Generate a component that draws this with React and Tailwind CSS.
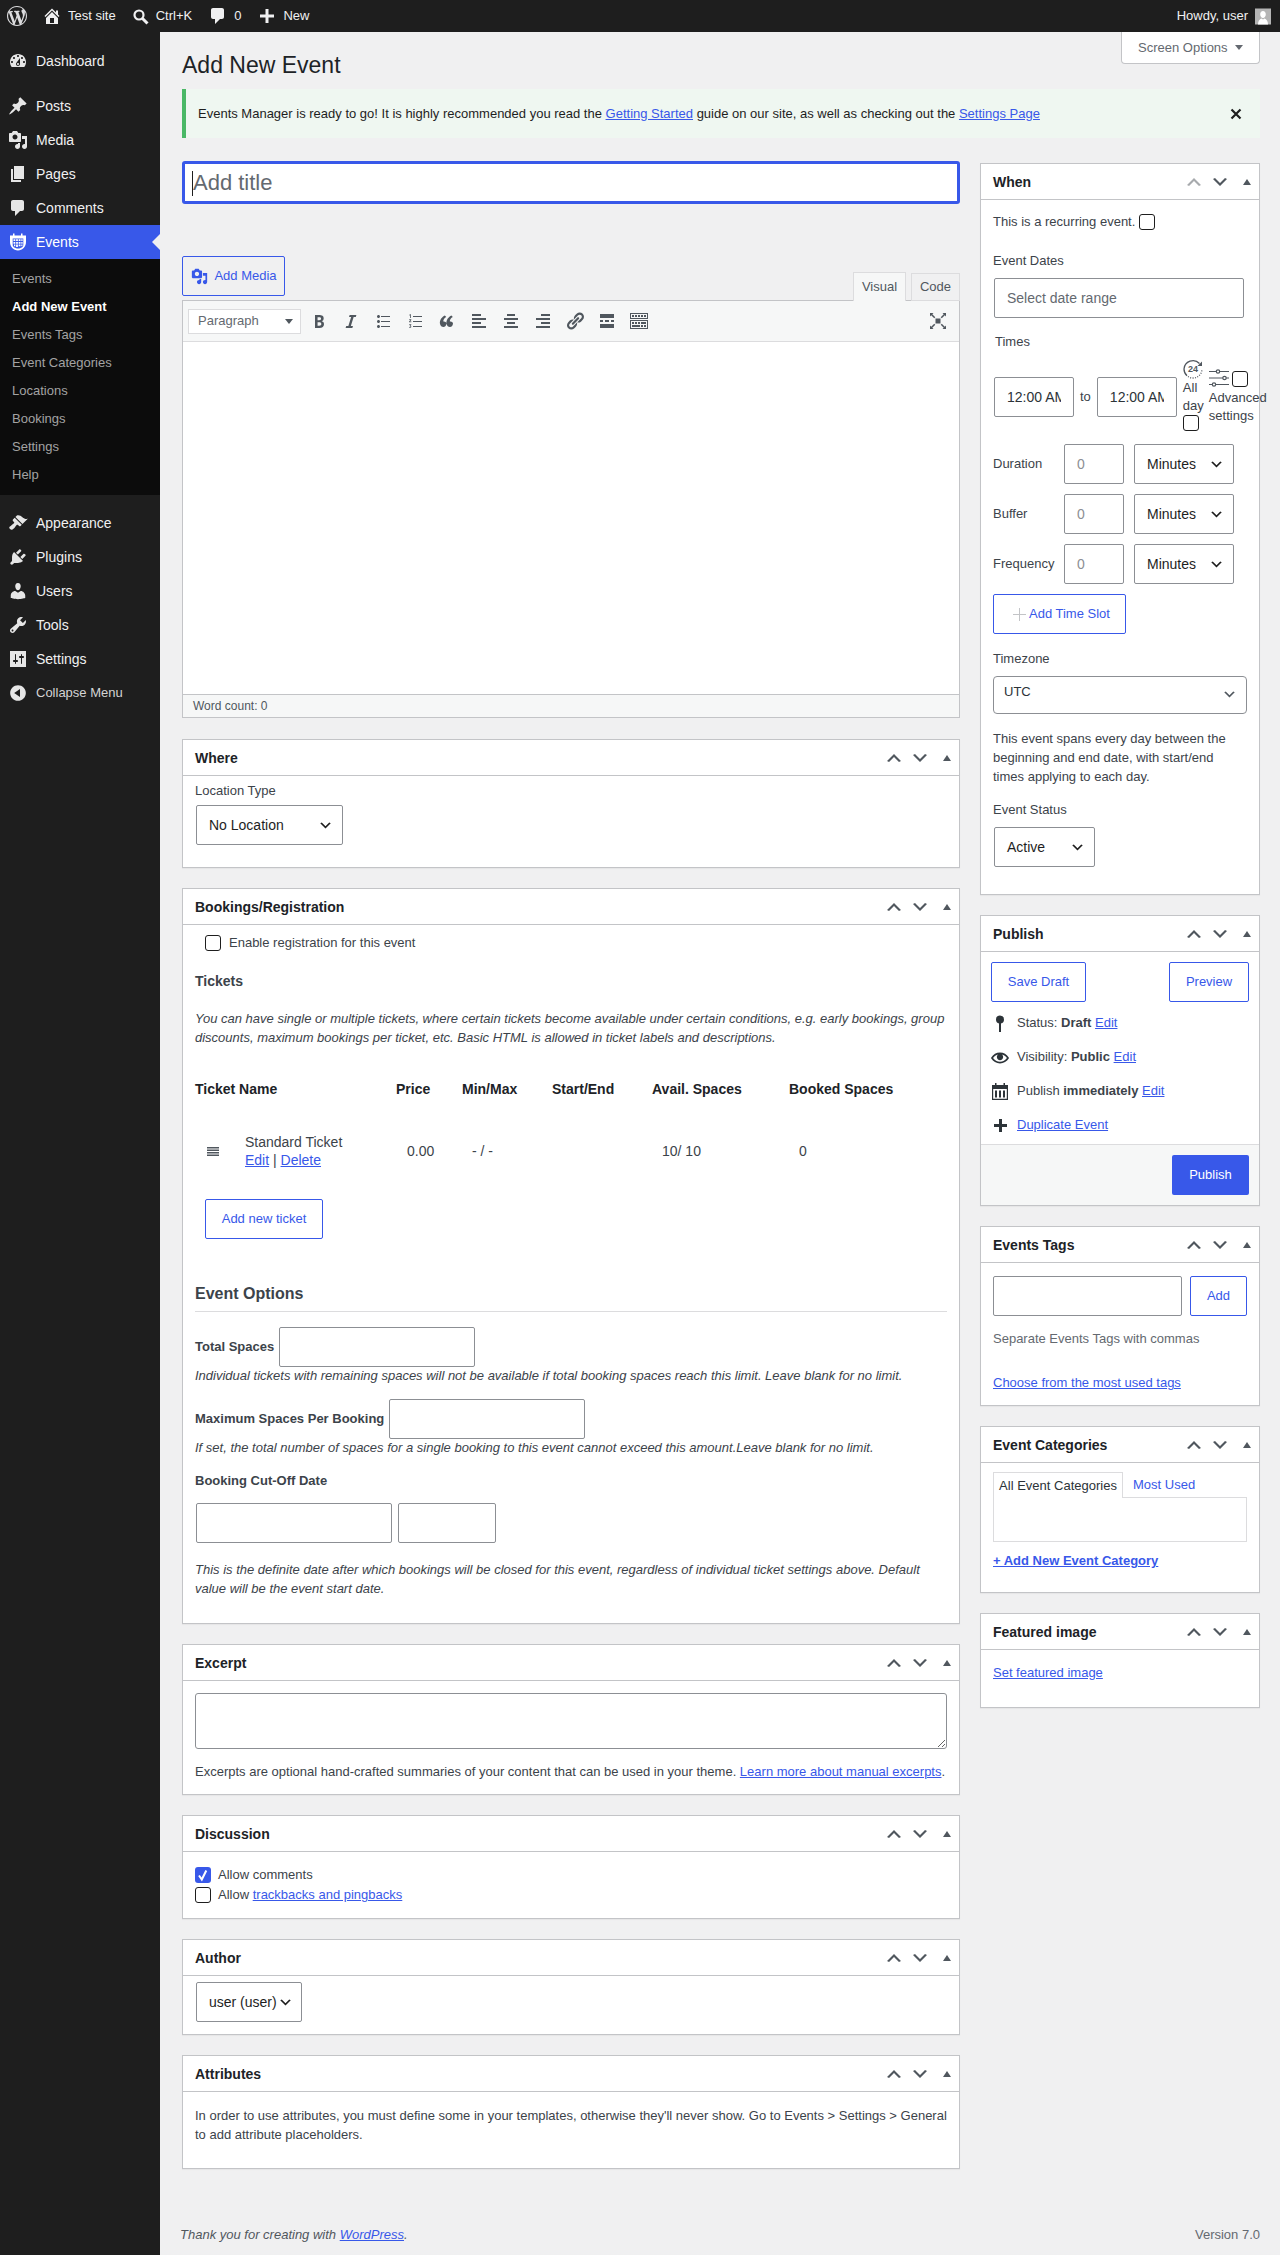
const paths = {
  dashboard: 'M3.76 16h12.48c1.1-1.37 1.76-3.11 1.76-5 0-4.42-3.58-8-8-8s-8 3.58-8 8c0 1.89.66 3.63 1.76 5zM10 4c.55 0 1 .45 1 1s-.45 1-1 1-1-.45-1-1 .45-1 1-1zM6 6c.55 0 1 .45 1 1s-.45 1-1 1-1-.45-1-1 .45-1 1-1zm8 0c.55 0 1 .45 1 1s-.45 1-1 1-1-.45-1-1 .45-1 1-1zm-5.37 5.55L12 7v6c0 1.1-.9 2-2 2s-2-.9-2-2c0-.57.24-1.08.63-1.45zM4 10c.55 0 1 .45 1 1s-.45 1-1 1-1-.45-1-1 .45-1 1-1zm12 0c.55 0 1 .45 1 1s-.45 1-1 1-1-.45-1-1 .45-1 1-1zm-5 3c0-.55-.45-1-1-1s-1 .45-1 1 .45 1 1 1 1-.45 1-1z',
  pin: 'M10.44 3.02l1.82-1.82 6.36 6.35-1.83 1.82c-1.05-.68-2.48-.57-3.41.36l-.75.75c-.92.93-1.04 2.35-.35 3.41l-1.83 1.82-2.41-2.41-2.8 2.79c-.42.42-3.38 2.71-3.8 2.29s1.86-3.39 2.28-3.81l2.79-2.79L4.1 9.36l1.83-1.82c1.05.69 2.48.57 3.4-.36l.75-.75c.93-.92 1.05-2.35.36-3.41z',
  media: 'M13 11V4c0-.55-.45-1-1-1h-1.67L9 1H5L3.67 3H2c-.55 0-1 .45-1 1v7c0 .55.45 1 1 1h10c.55 0 1-.45 1-1zM7 4.5c1.38 0 2.5 1.12 2.5 2.5S8.38 9.5 7 9.5 4.5 8.38 4.5 7 5.62 4.5 7 4.5zM14 6h5v10.5c0 1.38-1.12 2.5-2.5 2.5S14 17.88 14 16.5s1.12-2.5 2.5-2.5c.17 0 .34.02.5.05V9h-3V6zm-4 8.05V13h2v3.5c0 1.38-1.12 2.5-2.5 2.5S7 17.88 7 16.5 8.12 14 9.5 14c.17 0 .34.02.5.05z',
  page: 'M6 15V2h10v13H6zm-1 1h8v2H3V5h2v11z',
  comment: 'M5 2h9c1.1 0 2 .9 2 2v7c0 1.1-.9 2-2 2h-2l-5 5v-5H5c-1.1 0-2-.9-2-2V4c0-1.1.9-2 2-2z',
  appearance: 'M14.48 11.06L7.41 3.99l1.5-1.5c.5-.56 2.3-.47 3.51.32 1.21.8 1.43 1.28 2.91 2.1 1.18.64 2.45 1.26 4.45.85zm-.71.71L6.7 4.7 4.93 6.47c-.39.39-.39 1.02 0 1.41l1.06 1.06c.39.39.39 1.03 0 1.42-.6.6-1.43 1.11-2.21 1.69-.35.26-.7.53-1.01.84C1.43 13.23.5 14.56 2 16s2.77.5 4.11-.77c.31-.31.58-.66.84-1.01.58-.78 1.09-1.61 1.69-2.21.39-.39 1.03-.39 1.42 0l1.06 1.06c.39.39 1.02.39 1.41 0z',
  plugins: 'M13.11 4.36L9.87 7.6 8 5.73l3.24-3.24c.35-.34 1.05-.2 1.56.32.52.51.66 1.21.31 1.55zm-8 1.77l.91-1.12 9.01 9.01-1.19.84c-.71.71-2.63 1.16-3.82 1.16H6.14L4.9 17.26c-.59.59-1.54.59-2.12 0-.59-.58-.59-1.53 0-2.12l1.24-1.24v-3.88c0-1.13.4-3.19 1.09-3.89zm7.26 3.97l3.24-3.24c.34-.35 1.04-.21 1.55.31.52.51.66 1.21.31 1.55l-3.24 3.25z',
  users: 'M10 9.25c-2.27 0-2.73-3.44-2.73-3.44C7 4.02 7.82 2 9.97 2c2.16 0 2.98 2.02 2.71 3.81 0 0-.41 3.44-2.68 3.44zm0 2.57L12.72 10c2.39 0 4.52 2.33 4.52 4.53v2.49s-3.65 1.13-7.24 1.13c-3.65 0-7.24-1.13-7.24-1.13v-2.49c0-2.25 1.94-4.48 4.47-4.48z',
  tools: 'M16.68 9.77c-1.34 1.34-3.3 1.67-4.95.99l-5.41 6.52c-.99.99-2.59.99-3.58 0s-.99-2.59 0-3.57l6.52-5.42c-.68-1.65-.35-3.61.99-4.95 1.28-1.28 3.12-1.62 4.72-1.06l-2.89 2.89 2.82 2.82 2.86-2.87c.53 1.58.18 3.39-1.08 4.65zM3.81 16.21c.4.39 1.04.39 1.43 0 .4-.4.4-1.04 0-1.43-.39-.4-1.03-.4-1.43 0-.39.39-.39 1.03 0 1.43z',
  settings: 'M18 18V2H2v16zM8 11h1c.55 0 1 .45 1 1s-.45 1-1 1H8v1.5c0 .28-.22.5-.5.5s-.5-.22-.5-.5V13H6c-.55 0-1-.45-1-1s.45-1 1-1h1V5.5c0-.28.22-.5.5-.5s.5.22.5.5V11zm5-2h-1c-.55 0-1-.45-1-1s.45-1 1-1h1V5.5c0-.28.22-.5.5-.5s.5.22.5.5V7h1c.55 0 1 .45 1 1s-.45 1-1 1h-1v5.5c0 .28-.22.5-.5.5s-.5-.22-.5-.5V9z',
  collapse: 'M10 2.16c4.33 0 7.84 3.51 7.84 7.84s-3.51 7.84-7.84 7.84S2.16 14.33 2.16 10 5.71 2.16 10 2.16zm2 11.72V6.12L6.18 9.97z',
  home: 'M16 8.5l1.53 1.53-1.06 1.06L10 4.62l-6.47 6.47-1.06-1.06L10 2.5l4 4v-2h2v4zm-6-2.46l6 5.99V18H4v-5.97zM12 17v-5H8v5h4z',
  wp: 'M20 10c0-5.51-4.49-10-10-10C4.48 0 0 4.49 0 10c0 5.52 4.48 10 10 10 5.51 0 10-4.48 10-10zM7.78 15.37L4.37 6.22c.55-.02 1.17-.08 1.17-.08.5-.06.44-1.13-.06-1.11 0 0-1.45.11-2.37.11-.18 0-.37 0-.58-.01C4.12 2.69 6.87 1.11 10 1.11c2.33 0 4.45.87 6.05 2.34-.68-.11-1.65.39-1.65 1.58 0 .74.45 1.36.9 2.1.35.61.55 1.36.55 2.46 0 1.49-1.4 5-1.4 5l-3.03-8.37c.54-.02.82-.17.82-.17.5-.05.44-1.25-.06-1.22 0 0-1.44.12-2.38.12-.87 0-2.33-.12-2.33-.12-.5-.03-.56 1.2-.06 1.22l.92.08 1.26 3.41zM17.41 10c.24-.64.74-1.87.43-4.25.7 1.29 1.05 2.71 1.05 4.25 0 3.29-1.73 6.24-4.4 7.78.97-2.59 1.94-5.2 2.92-7.78zM6.1 18.09C3.12 16.65 1.11 13.53 1.11 10c0-1.3.23-2.48.72-3.59C3.25 10.3 4.67 14.2 6.1 18.09zm4.03-6.63l2.58 6.98c-.86.29-1.76.45-2.71.45-.79 0-1.57-.11-2.29-.33.81-2.38 1.62-4.74 2.42-7.1z',
  plus: 'M8.5 3h3v5.5H17v3h-5.5V17h-3v-5.5H3v-3h5.5z',
  up: 'M15 14l-5-5-5 5-2-1 7-7 7 7z',
  down: 'M5 6l5 5 5-5 2 1-7 7-7-7z',
  tri: 'M6 13l4-6 4 6z',
  bold: 'M6 4v13h4.54c1.37 0 2.46-.33 3.26-1 .8-.66 1.2-1.58 1.2-2.77 0-.84-.17-1.51-.51-2.01s-.9-.85-1.67-1.03v-.09c.57-.1 1.02-.4 1.36-.9s.51-1.13.51-1.91c0-1.14-.39-1.98-1.17-2.5C12.75 4.26 11.5 4 9.78 4H6zm2.57 5.15V6.26h1.36c.73 0 1.27.11 1.61.32.34.22.51.58.51 1.07 0 .54-.16.92-.47 1.15s-.82.35-1.51.35h-1.5zm0 2.19h1.6c1.44 0 2.16.53 2.16 1.61 0 .6-.17 1.05-.51 1.34s-.86.43-1.57.43H8.57v-3.38z',
  italic: 'M14.78 6h-2.13l-2.8 9h2.12l-.62 2H4.6l.62-2h2.14l2.8-9H8.03l.62-2h6.75z',
  ul: 'M5.5 7C4.67 7 4 6.33 4 5.5 4 4.68 4.67 4 5.5 4 6.32 4 7 4.68 7 5.5 7 6.33 6.32 7 5.5 7zM8 5h9v1H8V5zm-2.5 7c-.83 0-1.5-.67-1.5-1.5C4 9.68 4.67 9 5.5 9c.82 0 1.5.68 1.5 1.5 0 .83-.68 1.5-1.5 1.5zM8 10h9v1H8v-1zm-2.5 7c-.83 0-1.5-.67-1.5-1.5 0-.82.67-1.5 1.5-1.5.82 0 1.5.68 1.5 1.5 0 .83-.68 1.5-1.5 1.5zM8 15h9v1H8v-1z',
  ol: 'M8 5h9v1H8V5zm0 5h9v1H8v-1zm0 5h9v1H8v-1zM5.2 3.2h.7V7h-.8V4.2l-.7.4-.3-.5zM4.2 8.3h2.1v.7l-1.2 1.6h1.3v.7H4.1v-.7l1.2-1.6H4.2zm0 5h2.1v.7l-.8.8c.5.1.8.4.8.9 0 .7-.6 1-1.2 1-.4 0-.7-.1-1-.2v-.6c.3.1.6.2.9.2.3 0 .5-.1.5-.4s-.2-.4-.6-.4h-.3v-.6l.8-.8H4.2z',
  quote: 'M9.49 13.22c0-.74-.2-1.38-.61-1.9-.62-.78-1.83-.88-2.53-.72-.29-1.65 1.11-3.75 2.92-4.65L7.88 4.4c-2.73 1.3-5.42 4.28-4.96 8.05C3.21 14.85 4.9 16 6.43 16c.75 0 1.38-.23 1.89-.71.51-.48.77-1.08.77-1.82zm6.54 0c0-.74-.2-1.38-.61-1.9-.63-.78-1.83-.88-2.53-.72-.29-1.65 1.11-3.75 2.92-4.65L14.43 4.4c-2.73 1.3-5.42 4.28-4.96 8.05.29 2.4 1.98 3.55 3.51 3.55.75 0 1.38-.23 1.89-.71.51-.48.77-1.08.77-1.82z',
  alignleft: 'M12 5V3H3v2h9zm5 4V7H3v2h14zm-5 4v-2H3v2h9zm5 4v-2H3v2h14z',
  aligncenter: 'M14 5V3H6v2h8zm3 4V7H3v2h14zm-3 4v-2H6v2h8zm3 4v-2H3v2h14z',
  alignright: 'M17 5V3H8v2h9zm0 4V7H3v2h14zm0 4v-2H8v2h9zm0 4v-2H3v2h14z',
  link: 'M17.74 2.76c1.68 1.69 1.68 4.41 0 6.1l-1.53 1.52c-1.12 1.12-2.7 1.47-4.14 1.09l2.62-2.61.76-.77.76-.76c.84-.84.84-2.2 0-3.04-.84-.85-2.2-.85-3.04 0l-.77.76-3.38 3.38c-.37-1.44-.02-3.02 1.1-4.14l1.52-1.53c1.69-1.68 4.42-1.68 6.1 0zM8.59 13.43l5.34-5.34c.42-.42.42-1.1 0-1.52-.44-.43-1.13-.39-1.53 0l-5.33 5.34c-.42.42-.42 1.1 0 1.52.44.43 1.13.39 1.52 0zm-.76 2.29l4.14-4.15c.38 1.44.03 3.02-1.09 4.14l-1.52 1.53c-1.69 1.68-4.41 1.68-6.1 0-1.68-1.68-1.68-4.42 0-6.1l1.53-1.52c1.12-1.12 2.7-1.47 4.14-1.1l-4.14 4.15c-.85.84-.85 2.2 0 3.05.84.84 2.2.84 3.04 0z',
  more: 'M17 7V3H3v4h14zM6 11V9H3v2h3zm6 0V9H8v2h4zm5 0V9h-3v2h3zm0 6v-4H3v4h14z',
  kitchen: 'M19 2v6H1V2h18zm-1 5V3H2v4h16zM5 4v2H3V4h2zm3 0v2H6V4h2zm3 0v2H9V4h2zm3 0v2h-2V4h2zm3 0v2h-2V4h2zm2 5v9H1V9h18zm-1 8v-7H2v7h16zM5 11v2H3v-2h2zm3 0v2H6v-2h2zm3 0v2H9v-2h2zm6 0v2h-5v-2h5zm-6 3v2H3v-2h8zm3 0v2h-2v-2h2zm3 0v2h-2v-2h2z',
  dfw: 'M7.5 7.5h5v5h-5zM2 2h3.5L4.3 3.2l3 3-1.100 1.100-3-3L2 5.500zm16 0v3.500l-1.200-1.200-3 3-1.100-1.100 3-3L14.500 2zM2 18v-3.500l1.200 1.200 3-3 1.100 1.100-3 3L5.500 18zm16 0h-3.500l1.200-1.200-3-3 1.100-1.100 3 3 1.200-1.200z',
  eye: 'M19.7 9.4C17.7 6 14 3.9 10 3.9S2.3 6 .3 9.4L0 10l.3.6c2 3.4 5.7 5.5 9.7 5.5s7.7-2.1 9.7-5.5l.3-.6-.3-.6zM10 14.1c-3.1 0-6-1.6-7.7-4.1C3.6 8 5.7 6.600 8 6.100c-.9.6-1.5 1.700-1.5 2.900 0 1.900 1.600 3.500 3.500 3.500s3.500-1.600 3.500-3.500c0-1.200-.6-2.300-1.500-2.900 2.300.5 4.400 1.900 5.700 3.900-1.700 2.500-4.600 4.100-7.700 4.100z',
}

const Icon = ({ name, size = 20, className = '' }) => (
  <svg viewBox="0 0 20 20" width={size} height={size} fill="currentColor" fillRule="evenodd" className={`shrink-0 ${className}`}>
    <path d={paths[name]} />
  </svg>
)

const EventsIcon = () => (
  <svg viewBox="0 0 20 20" width="20" height="20" className="shrink-0">
    <path fill="#fff" d="M2 3.5h3V1.500h1.500v2h6.500V1.500h1.500v2H18V10c0 4.500-3.500 8.500-8 8.500S2 14.500 2 10z" />
    <path fill="#3858e9" d="M4.700 6.500h10.600v6.500c0 1.800-2.400 3.500-5.300 3.500S4.700 14.800 4.700 13z" />
    <path fill="#fff" d="M5.500 7.300h1.800v1.800H5.500zm2.600 0h1.800v1.800H8.100zm2.600 0h1.800v1.800h-1.800zm2.600 0h1.300v1.800h-1.300zM5.500 9.900h1.800v1.800H5.500zm2.600 0h1.800v1.800H8.100zm2.600 0h1.800v1.800h-1.800zm2.600 0h1.300v1.800h-1.300zM6 12.500h1.300v1.800H6zm2.100 0h1.800v2.600H8.100zm2.600 0h1.800v1.800h-1.800zm2.600 0H14.500v1.200l-1.200.6z" />
  </svg>
)

const MENU_TOP = [
  ['pin', 'Posts'],
  ['media', 'Media'],
  ['page', 'Pages'],
  ['comment', 'Comments'],
]
const MENU_BOTTOM = [
  ['appearance', 'Appearance'],
  ['plugins', 'Plugins'],
  ['users', 'Users'],
  ['tools', 'Tools'],
  ['settings', 'Settings'],
]
const SUBMENU = ['Events', 'Add New Event', 'Events Tags', 'Event Categories', 'Locations', 'Bookings', 'Settings', 'Help']
const TOOLBAR = ['bold', 'italic', 'ul', 'ol', 'quote', 'alignleft', 'aligncenter', 'alignright', 'link', 'more', 'kitchen']

const MenuItem = ({ icon, label }) => (
  <div className="flex h-[34px] items-center pl-2 text-sm text-[#f0f0f1]">
    <Icon name={icon} className="text-[#e6e6e6]" />
    <span className="ml-2">{label}</span>
  </div>
)

const Sidebar = () => (
  <aside className="w-40 shrink-0 bg-[#1e1e1e] pt-3">
    <MenuItem icon="dashboard" label="Dashboard" />
    <div className="mt-[11px]">
      {MENU_TOP.map(([icon, label]) => <MenuItem key={label} icon={icon} label={label} />)}
    </div>
    <div className="relative flex h-[34px] items-center bg-[#3858e9] pl-2 text-sm text-white">
      <EventsIcon />
      <span className="ml-2">Events</span>
      <span className="absolute right-0 top-[9px] h-0 w-0 border-y-8 border-r-8 border-y-transparent border-r-[#f0f0f1]" />
    </div>
    <div className="bg-[#0c0c0c] py-1.5">
      {SUBMENU.map((item) => (
        <div key={item} className={`flex h-7 items-center pl-3 text-[13px] ${item === 'Add New Event' ? 'font-bold text-white' : 'text-[#a3a3a3]'}`}>
          {item}
        </div>
      ))}
    </div>
    <div className="mt-[11px]">
      {MENU_BOTTOM.map(([icon, label]) => <MenuItem key={label} icon={icon} label={label} />)}
      <div className="flex h-[34px] items-center pl-2 text-[13px] text-[#d4d4d4]">
        <Icon name="collapse" className="text-[#e6e6e6]" />
        <span className="ml-2">Collapse Menu</span>
      </div>
    </div>
  </aside>
)

const AdminBar = () => (
  <header className="flex h-8 items-center bg-[#1e1e1e] text-[13px] text-[#f0f0f1]">
    <Icon name="wp" className="ml-[7px] text-[#dcdcde]" />
    <Icon name="home" className="ml-[15px]" />
    <span className="ml-1.5">Test site</span>
    <svg viewBox="0 0 18 18" width="18" height="18" className="ml-4 mt-0.5 shrink-0" fill="none" stroke="currentColor">
      <circle cx="7" cy="7" r="4.5" strokeWidth="2.2" />
      <path d="M10.5 10.5l5 5" strokeWidth="3" />
    </svg>
    <span className="ml-1.5">Ctrl+K</span>
    <Icon name="comment" className="ml-4" />
    <span className="ml-1.5">0</span>
    <Icon name="plus" className="ml-4" />
    <span className="ml-1.5">New</span>
    <span className="ml-auto">Howdy, user</span>
    <svg viewBox="0 0 16 16" width="16" height="17" className="ml-[7px] mr-[9px] shrink-0">
      <rect width="16" height="16" fill="#b5b5b5" />
      <path fill="#fff" d="M8 2.5c1.7 0 2.8 1.3 2.8 3.2S9.7 9.5 8 9.5 5.200 7.600 5.200 5.700 6.300 2.500 8 2.500zM3 16c0-3.500 1.500-5.500 3.500-6l1.500 1 1.500-1c2 .5 3.500 2.500 3.500 6z" />
    </svg>
  </header>
)

const Box = ({ title, upLight, children, className = '' }) => (
  <section className={`border border-[#c3c4c7] bg-white shadow-[0_1px_1px_rgba(0,0,0,0.04)] ${className}`}>
    <div className="flex h-9 items-center border-b border-[#c3c4c7] pl-3">
      <h2 className="flex-1 text-sm font-bold text-[#1d2327]">{title}</h2>
      <span className={`flex w-[22px] justify-center ${upLight ? 'text-[#a7aaad]' : 'text-[#50575e]'}`}><Icon name="up" /></span>
      <span className="flex w-[30px] justify-center text-[#50575e]"><Icon name="down" /></span>
      <span className="flex w-6 justify-center text-[#50575e]"><Icon name="tri" /></span>
    </div>
    {children}
  </section>
)

const Check = ({ className = '' }) => (
  <span className={`inline-block h-4 w-4 shrink-0 rounded-[3px] border border-[#1e1e1e] bg-white ${className}`} />
)

const Input = ({ className = '', ...props }) => (
  <input className={`h-10 rounded-[2px] border border-[#8c8f94] bg-white px-3 text-sm text-[#2c3338] outline-none ${className}`} {...props} />
)

const Select = ({ label, className = '' }) => (
  <div className={`flex h-10 items-center justify-between rounded-[2px] border border-[#8c8f94] bg-white pl-3 pr-[9px] text-sm text-[#1e1e1e] ${className}`}>
    <span className="whitespace-nowrap">{label}</span>
    <Icon name="down" size={15} />
  </div>
)

const Btn = ({ children, className = '' }) => (
  <button type="button" className={`flex h-10 items-center justify-center rounded-[2px] border border-[#3858e9] text-[13px] text-[#3858e9] ${className}`}>
    {children}
  </button>
)

const A = ({ children, className = '' }) => (
  <a href="#" className={`text-[#3858e9] underline ${className}`}>{children}</a>
)

const Editor = () => (
  <>
    <div className="mt-[52px] flex items-end justify-between">
      <Btn className="mb-1 w-[103px]">
        <Icon name="media" size={17} className="mr-[6px] ml-px" />
        Add Media
      </Btn>
      <div className="relative z-10 -mb-px flex items-end text-[13px] text-[#50575e]">
        <div className="flex h-[29px] w-[53px] items-center justify-center border border-b-0 border-[#dcdcde] bg-[#f6f7f7]">Visual</div>
        <div className="ml-[5px] flex h-7 w-[49px] items-center justify-center border border-[#dcdcde] bg-[#f0f0f1]">Code</div>
      </div>
    </div>
    <div className="flex h-[418px] flex-col border border-[#c3c4c7] bg-white">
      <div className="flex h-[41px] items-center border-b border-[#dcdcde] bg-[#f6f7f7] pl-[5px] pr-[11px] text-[#50575e]">
        <div className="flex h-[25px] w-[113px] items-center justify-between border border-[#dcdcde] bg-white pl-[9px] pr-[7px] text-[13px] text-[#646970]">
          Paragraph
          <span className="h-0 w-0 border-x-4 border-t-[5px] border-x-transparent border-t-[#50575e]" />
        </div>
        <div className="ml-0.5 flex">
          {TOOLBAR.map((name) => (
            <span key={name} className="flex w-8 justify-center"><Icon name={name} /></span>
          ))}
        </div>
        <Icon name="dfw" className="ml-auto" />
      </div>
      <div className="flex-1" />
      <div className="flex h-[23px] items-center border-t border-[#c3c4c7] bg-[#f6f7f7] pl-[10px] text-xs text-[#50575e]">Word count: 0</div>
    </div>
  </>
)

const LeftColumn = () => (
  <div className="w-[778px] shrink-0 text-[13px] text-[#3c434a]">
    <div className="relative h-[43px] rounded-[3px] border-[3px] border-[#3858e9] bg-white">
      <input className="h-full w-full pl-[8px] text-[22px] outline-none placeholder:text-[#646970]" placeholder="Add title" />
      <span className="absolute left-[7px] top-[7px] h-[25px] w-px bg-[#1e1e1e]" />
    </div>
    <Editor />

    <Box title="Where" className="mt-[21px] h-[129px]">
      <div className="px-3 pt-[6px]">
        <div className="h-[18px] leading-[18px]">Location Type</div>
        <Select label="No Location" className="ml-px mt-[5px] w-[147px]" />
      </div>
    </Box>

    <Box title="Bookings/Registration" className="mt-5 h-[736px]">
      <div className="px-3 pt-[10px]">
        <div className="ml-[10px] flex h-4 items-center">
          <Check />
          <span className="ml-2">Enable registration for this event</span>
        </div>
        <div className="mt-[21px] h-[18px] text-sm font-bold leading-[18px]">Tickets</div>
        <p className="mt-5 w-[752px] italic leading-[18.5px]">
          You can have single or multiple tickets, where certain tickets become available under certain conditions, e.g. early bookings, group discounts, maximum bookings per ticket, etc. Basic HTML is allowed in ticket labels and descriptions.
        </p>
        <div className="mt-[33px] grid h-[18px] grid-cols-[201px_66px_90px_100px_137px_1fr] text-sm font-bold leading-[18px] text-[#1d2327]">
          <span>Ticket Name</span>
          <span>Price</span>
          <span>Min/Max</span>
          <span>Start/End</span>
          <span>Avail. Spaces</span>
          <span>Booked Spaces</span>
        </div>
        <div className="mt-[35px] grid h-9 grid-cols-[201px_66px_90px_100px_137px_1fr] items-center text-sm leading-[18px]">
          <div className="flex items-center">
            <svg viewBox="0 0 12 9" width="12" height="9" className="ml-3 shrink-0" fill="#50575e">
              <path d="M0 0h12v1.5H0zM0 2.5h12V4H0zM0 5h12v1.5H0zM0 7.5h12V9H0z" />
            </svg>
            <div className="ml-[26px]">
              <div>Standard Ticket</div>
              <div><A>Edit</A> | <A>Delete</A></div>
            </div>
          </div>
          <span className="pl-[11px]">0.00</span>
          <span className="pl-[10px]">- / -</span>
          <span />
          <span className="pl-[10px]">10/ 10</span>
          <span className="pl-[10px]">0</span>
        </div>
        <Btn className="ml-[10px] mt-[30px] w-[118px]">Add new ticket</Btn>
        <h3 className="mt-[46px] h-[18px] text-base font-bold leading-[18px]">Event Options</h3>
        <div className="mt-2 border-t border-[#dcdcde]" />
        <div className="mt-[15px] flex items-center">
          <b className="whitespace-nowrap">Total Spaces</b>
          <Input className="ml-[5px] w-[196px]" />
        </div>
        <p className="h-[18px] italic leading-[18px]">Individual tickets with remaining spaces will not be available if total booking spaces reach this limit. Leave blank for no limit.</p>
        <div className="mt-[14px] flex items-center">
          <b className="whitespace-nowrap">Maximum Spaces Per Booking</b>
          <Input className="ml-[5px] w-[196px]" />
        </div>
        <p className="h-[18px] italic leading-[18px]">If set, the total number of spaces for a single booking to this event cannot exceed this amount.Leave blank for no limit.</p>
        <div className="mt-[15px] h-[18px] font-bold leading-[18px]">Booking Cut-Off Date</div>
        <div className="ml-px mt-[13px] flex">
          <Input className="w-[196px]" />
          <Input className="ml-[6px] w-[98px]" />
        </div>
        <p className="mt-[18px] w-[752px] italic leading-[18.5px]">
          This is the definite date after which bookings will be closed for this event, regardless of individual ticket settings above. Default value will be the event start date.
        </p>
      </div>
    </Box>

    <Box title="Excerpt" className="mt-5 h-[151px]">
      <div className="px-3 pt-3">
        <textarea className="block h-[56px] w-[752px] rounded-[3px] border border-[#8c8f94] bg-white outline-none" />
        <p className="mt-[14px] leading-[18px]">
          Excerpts are optional hand-crafted summaries of your content that can be used in your theme. <A>Learn more about manual excerpts</A>.
        </p>
      </div>
    </Box>

    <Box title="Discussion" className="mt-5 h-[104px]">
      <div className="px-3 pt-[15px]">
        <div className="flex h-4 items-center">
          <span className="flex h-4 w-4 shrink-0 items-center justify-center rounded-[3px] bg-[#3858e9]">
            <svg viewBox="0 0 16 16" width="16" height="16" fill="none" stroke="#fff" strokeWidth="2"><path d="M4 8.5l2.8 4 4.500-9" /></svg>
          </span>
          <span className="ml-[7px]">Allow comments</span>
        </div>
        <div className="mt-1 flex h-4 items-center">
          <Check />
          <span className="ml-[7px]">Allow <A>trackbacks and pingbacks</A></span>
        </div>
      </div>
    </Box>

    <Box title="Author" className="mt-5 h-[96px]">
      <div className="pl-[13px] pt-[6px]">
        <Select label="user (user)" className="w-[106px] !pr-[8px]" />
      </div>
    </Box>

    <Box title="Attributes" className="mt-5 h-[114px]">
      <p className="px-3 pt-[14px] leading-[19px]">
        In order to use attributes, you must define some in your templates, otherwise they'll never show. Go to Events &gt; Settings &gt; General to add attribute placeholders.
      </p>
    </Box>
  </div>
)

const WhenBox = () => (
  <Box title="When" upLight className="h-[732px]">
    <div className="px-3 pt-[14px]">
      <div className="flex h-4 items-center">
        This is a recurring event.
        <Check className="ml-1" />
      </div>
      <div className="mt-[22px] h-[18px] leading-[18px]">Event Dates</div>
      <Input className="ml-px mt-2 w-[250px] placeholder:text-[#646970]" placeholder="Select date range" />
      <div className="ml-0.5 mt-[15px] h-[18px] leading-[18px]">Times</div>
      <div className="ml-px mt-2 flex h-[73px] items-start leading-[18px]">
        <Input className="mt-[18px] w-20" defaultValue="12:00 AM" readOnly />
        <span className="ml-1.5 mt-[29px]">to</span>
        <Input className="ml-1.5 mt-[18px] w-20" defaultValue="12:00 AM" readOnly />
        <div className="ml-1.5 w-5">
          <svg viewBox="0 0 20 20" width="20" height="20" className="text-[#50575e]" fill="none" stroke="currentColor" strokeWidth="1.3">
            <path d="M16.500 4.500A9 9 0 0 0 1 10a9 9 0 0 0 3 6.700" />
            <path strokeDasharray="1 1.400" d="M5 17.500A9 9 0 0 0 19 10" />
            <path fill="currentColor" stroke="none" d="M19 2.500v4.500h-4.500z" />
            <text x="10" y="13" textAnchor="middle" fontSize="9" fontWeight="700" fill="currentColor" stroke="none">24</text>
          </svg>
          <div>All</div>
          <div>day</div>
          <Check />
        </div>
        <div className="ml-1.5 mt-[10px] w-[60px] whitespace-nowrap">
          <div className="flex h-5 items-center">
            <svg viewBox="0 0 20 20" width="20" height="20" className="shrink-0" fill="none" stroke="#50575e" strokeWidth="1.2">
              <path d="M0 2.500h20M0 9h20M0 15.500h20" />
              <circle cx="9" cy="2.500" r="1.700" fill="#fff" />
              <circle cx="15.500" cy="9" r="1.700" fill="#fff" />
              <circle cx="5" cy="15.500" r="1.700" fill="#fff" />
            </svg>
            <Check className="ml-[3px]" />
          </div>
          <div>Advanced</div>
          <div>settings</div>
        </div>
      </div>
      <div className="mt-3 flex flex-col gap-[10px]">
        {['Duration', 'Buffer', 'Frequency'].map((label) => (
          <div key={label} className="flex items-center">
            <span className="w-[71px]">{label}</span>
            <Input className="w-[60px] placeholder:text-[#8c8f94]" placeholder="0" />
            <Select label="Minutes" className="ml-[10px] w-[100px]" />
          </div>
        ))}
      </div>
      <Btn className="mt-[10px] w-[133px] justify-start pl-[19px]">
        <svg viewBox="0 0 13 13" width="13" height="13" className="mr-[3px]" stroke="#c3c4c7" strokeWidth="1"><path d="M6.5 0v13M0 6.5h13" /></svg>
        Add Time Slot
      </Btn>
      <div className="mt-4 h-[18px] leading-[18px]">Timezone</div>
      <div className="mt-2 flex h-[38px] w-[254px] items-start justify-between rounded-[4px] border border-[#8c8f94] bg-white pl-[10px] pr-[9px] pt-[6px] text-[#2c3338]">
        <span className="leading-[18px]">UTC</span>
        <Icon name="down" size={15} className="mt-[4px] text-[#50575e]" />
      </div>
      <p className="mt-[15px] leading-[19px]">This event spans every day between the beginning and end date, with start/end times applying to each day.</p>
      <div className="mt-[15px] h-[18px] leading-[18px]">Event Status</div>
      <Select label="Active" className="ml-px mt-2 w-[101px]" />
    </div>
  </Box>
)

const PublishRow = ({ icon, children }) => (
  <div className="flex h-[34px] items-center">
    <span className="flex w-[18px] justify-center text-[#2c3338]">{icon}</span>
    <span className="ml-2">{children}</span>
  </div>
)

const PublishBox = () => (
  <Box title="Publish" className="mt-5 h-[291px]">
    <div className="flex justify-between pl-[10px] pr-[10px] pt-[10px]">
      <Btn className="w-[95px]">Save Draft</Btn>
      <Btn className="w-20">Preview</Btn>
    </div>
    <div className="mt-1 pl-[10px]">
      <PublishRow icon={
        <svg viewBox="0 0 10 17" width="10" height="17" fill="currentColor"><circle cx="5" cy="4.5" r="4" /><path d="M4 6h2v11H4z" /></svg>
      }>Status: <b>Draft</b> <A>Edit</A></PublishRow>
      <PublishRow icon={<Icon name="eye" size={18} className="mt-0.5" />}>Visibility: <b>Public</b> <A>Edit</A></PublishRow>
      <PublishRow icon={
        <svg viewBox="0 0 16 17" width="16" height="17" fill="currentColor" fillRule="evenodd">
          <path d="M3 0h1.5v2h7V0H13v2h3v15H0V2h3zM1.2 6v9.800h13.600V6zM3 7.500h2v7H3zm4 0h2v7H7zm4 0h2v7h-2z" />
        </svg>
      }>Publish <b>immediately</b> <A>Edit</A></PublishRow>
      <PublishRow icon={
        <svg viewBox="0 0 13 13" width="13" height="13" fill="currentColor"><path d="M5 0h3v5h5v3H8v5H5V8H0V5h5z" /></svg>
      }><A>Duplicate Event</A></PublishRow>
    </div>
    <div className="mt-0.5 flex h-[61px] justify-end border-t border-[#dcdcde] bg-[#f6f7f7] pr-[10px] pt-[10px]">
      <button type="button" className="h-10 w-[77px] rounded-[2px] bg-[#3858e9] text-[13px] text-white">Publish</button>
    </div>
  </Box>
)

const RightColumn = () => (
  <div className="w-[280px] shrink-0 pt-0.5 text-[13px] text-[#3c434a]">
    <WhenBox />
    <PublishBox />
    <Box title="Events Tags" className="mt-5 h-[180px]">
      <div className="px-3 pt-[13px]">
        <div className="flex">
          <Input className="w-[189px]" />
          <Btn className="ml-2 w-[57px]">Add</Btn>
        </div>
        <p className="mt-[14px] leading-[18px] text-[#646970]">Separate Events Tags with commas</p>
        <p className="mt-[26px] leading-[18px]"><A>Choose from the most used tags</A></p>
      </div>
    </Box>
    <Box title="Event Categories" className="mt-5 h-[167px]">
      <div className="px-3 pt-[9px]">
        <div className="flex">
          <div className="relative z-10 -mb-px flex h-[26px] w-[130px] items-center justify-center border border-b-0 border-[#dcdcde] bg-white text-[#2c3338]">All Event Categories</div>
          <a href="#" className="ml-[10px] flex items-center text-[#3858e9]">Most Used</a>
        </div>
        <div className="h-[45px] w-[254px] border border-[#dcdcde]" />
        <p className="mt-[10px] font-bold leading-[18px]"><A>+ Add New Event Category</A></p>
      </div>
    </Box>
    <Box title="Featured image" className="mt-5 h-[95px]">
      <p className="px-3 pt-[14px] leading-[18px]"><A>Set featured image</A></p>
    </Box>
  </div>
)

export default function App() {
  return (
    <div className="min-h-[2255px] bg-[#f0f0f1] font-['Liberation_Sans',Arial,sans-serif]">
      <AdminBar />
      <div className="flex min-h-[2223px]">
        <Sidebar />
        <main className="relative min-w-0 flex-1 pl-[22px] pr-5 pt-[19px]">
          <div className="absolute right-5 top-0 flex h-8 w-[139px] items-center rounded-b-[4px] border border-t-0 border-[#c3c4c7] bg-white pl-[16px] text-[13px] text-[#646970]">
            Screen Options
            <span className="ml-[7px] h-0 w-0 border-x-4 border-t-[5px] border-x-transparent border-t-[#646970]" />
          </div>
          <h1 className="h-[29px] text-[23px] leading-[29px] text-[#1d2327]">Add New Event</h1>
          <div className="mt-[9px] flex h-[49px] items-center justify-between border-l-4 border-[#4ab866] bg-[#eff7f1] pl-3 pr-[18px] text-[13px] text-[#1e1e1e]">
            <p>
              Events Manager is ready to go! It is highly recommended you read the <A>Getting Started</A> guide on our site, as well as checking out the <A>Settings Page</A>
            </p>
            <svg viewBox="0 0 12 12" width="12" height="12" fill="none" stroke="#1e1e1e" strokeWidth="2.2">
              <path d="M1.5 1.5l9 9M10.5 1.5l-9 9" />
            </svg>
          </div>
          <div className="mt-[23px] flex gap-5">
            <LeftColumn />
            <RightColumn />
          </div>
          <footer className="-ml-0.5 mt-[57px] flex justify-between text-[13px] leading-[18px]">
            <span className="italic text-[#50575e]">Thank you for creating with <A>WordPress</A>.</span>
            <span className="text-[#646970]">Version 7.0</span>
          </footer>
        </main>
      </div>
    </div>
  )
}
